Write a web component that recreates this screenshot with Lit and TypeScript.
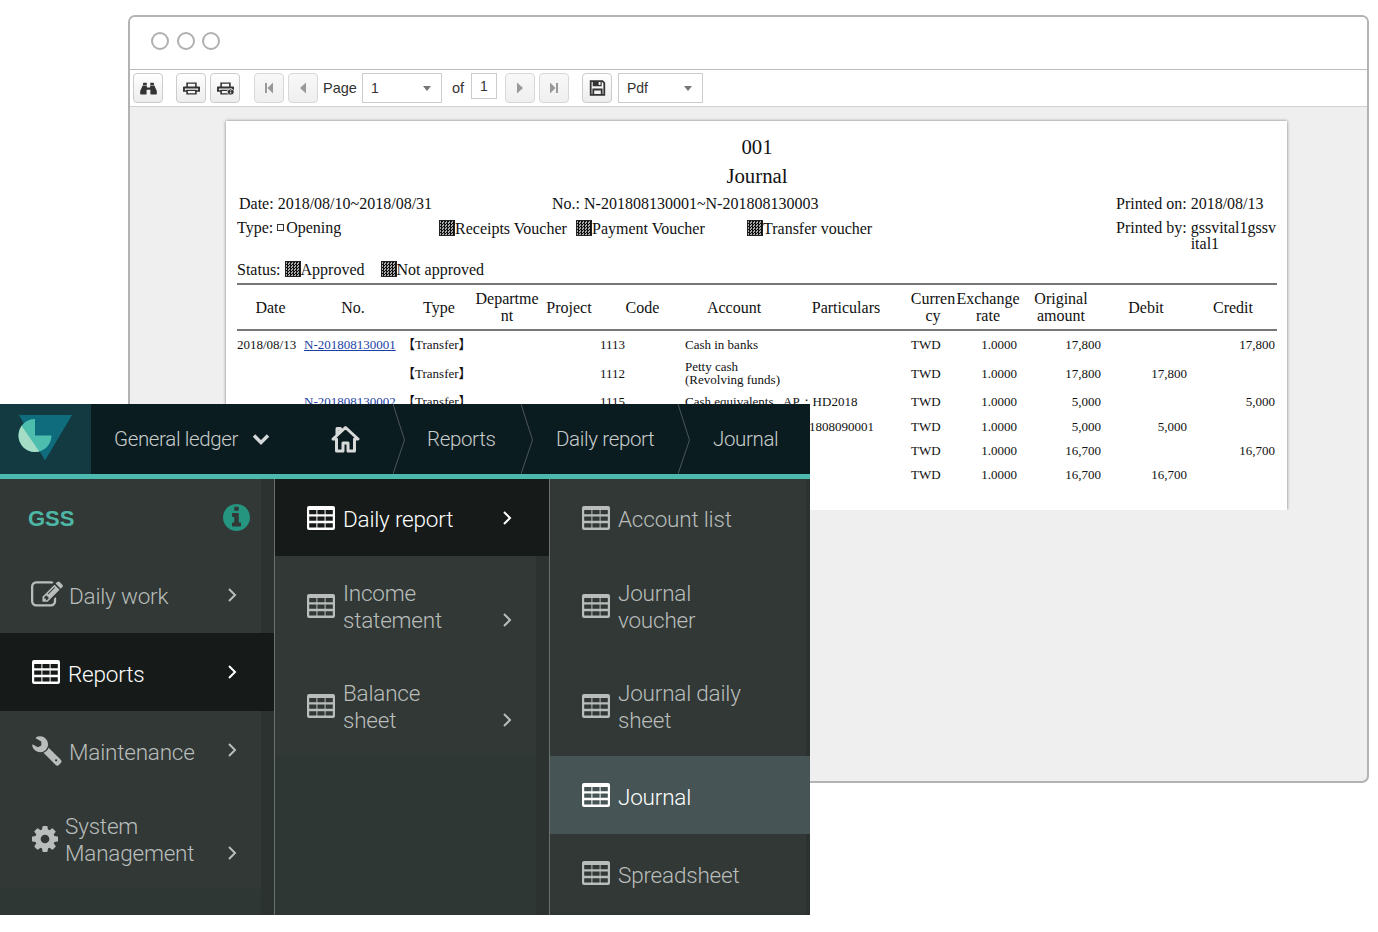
import { LitElement, html, css, svg } from "lit";
import { customElement } from "lit/decorators.js";

const cells = () => {
  let d = "M2 0h24a2 2 0 0 1 2 2v20a2 2 0 0 1-2 2H2a2 2 0 0 1-2-2V2a2 2 0 0 1 2-2z";
  for (const y of [4, 10.6, 17.2]) for (const x of [2.2, 10.4, 18.6]) d += `M${x} ${y}h7.2v4.2h-7.2z`;
  return d;
};
const tableIcon = html`<svg class="ic tb" viewBox="0 0 28 24"><path fill="currentColor" fill-rule="evenodd" d=${cells()}></path></svg>`;
const editIcon = html`<svg class="ic ed" viewBox="0 0 1792 1792"><path fill="currentColor" d="M888 1184l116-116-152-152-116 116v56h96v96h56zm440-720q-16-16-33 1l-350 350q-17 17-1 33t33-1l350-350q17-17 1-33zm80 594v190q0 119-84.5 203.5t-203.5 84.5h-832q-119 0-203.5-84.5t-84.5-203.5v-832q0-119 84.5-203.5t203.5-84.5h832q63 0 117 25 15 7 18 23 3 17-9 29l-49 49q-14 14-32 8-23-6-45-6h-832q-66 0-113 47t-47 113v832q0 66 47 113t113 47h832q66 0 113-47t47-113v-126q0-13 9-22l64-64q15-15 35-7t20 29zm-96-738l288 288-672 672h-288v-288zm444 132l-92 92-288-288 92-92q28-28 68-28t68 28l152 152q28 28 28 68t-28 68z"></path></svg>`;
const wrenchIcon = html`<svg class="ic wr" viewBox="0 0 1792 1792"><path fill="currentColor" transform="translate(1792 0) scale(-1 1)" d="M448 1472q0-26-19-45t-45-19-45 19-19 45 19 45 45 19 45-19 19-45zm644-420l-682 682q-37 37-90 37-52 0-91-37l-106-108q-38-36-38-90 0-53 38-91l681-681q39 98 114.5 173.5t173.5 114.5zm634-435q0 39-23 106-47 134-164.5 217.5t-258.5 83.5q-185 0-316.5-131.5t-131.5-316.5 131.5-316.5 316.5-131.5q58 0 121.5 16.5t107.5 46.5q16 11 16 28t-16 28l-293 169v224l193 107q5-3 79-48.5t135.5-81 70.5-35.5q15 0 23.5 10t8.5 25z"></path></svg>`;
const cogIcon = html`<svg class="ic cg" viewBox="128 128 1536 1536"><path fill="currentColor" d="M1152 896q0-106-75-181t-181-75-181 75-75 181 75 181 181 75 181-75 75-181zm512-109v222q0 12-8 23t-20 13l-185 28q-19 54-39 91 35 50 107 138 10 12 10 25t-9 23q-27 37-99 108t-94 71q-12 0-26-9l-138-108q-44 23-91 38-16 136-29 186-7 28-36 28h-222q-14 0-24.5-8.5t-11.5-21.5l-28-184q-49-16-90-37l-141 107q-10 9-25 9-14 0-25-11-126-114-165-168-7-10-7-23 0-12 8-23 15-21 51-66.5t54-70.5q-27-50-41-99l-183-27q-13-2-21-12.5t-8-23.5v-222q0-12 8-23t19-13l186-28q14-46 39-92-40-57-107-138-10-12-10-24 0-10 9-23 26-36 98.5-107.5t94.5-71.5q13 0 26 10l138 107q44-23 91-38 16-136 29-186 7-28 36-28h222q14 0 24.5 8.5t11.5 21.5l28 184q49 16 90 37l142-107q9-9 24-9 13 0 25 10 129 119 165 170 7 8 7 22 0 12-8 23-15 21-51 66.5t-54 70.5q26 50 41 98l183 28q13 2 21 12.5t8 23.5z"></path></svg>`;
const chev = html`<svg class="chev" viewBox="0 0 10 16"><path d="M2 2l6 6-6 6" fill="none" stroke="currentColor" stroke-width="2"></path></svg>`;

const binoc = html`<svg viewBox="0 0 18 16" preserveAspectRatio="none" class="tbi sq"><path fill="currentColor" d="M3.5.8h3.6v3H3zM10.900.8h3.600l.5 3h-4.100zM2.800 4.400h4.500v2.400h3.400V4.400h4.500L17.800 11v3.700a.6.600 0 0 1-.6.600h-5.600a.6.600 0 0 1-.6-.6V9.400H7v5.300a.6.600 0 0 1-.6.600H.8a.6.600 0 0 1-.6-.6V11z"></path></svg>`;
const printI = (extra: boolean) => html`<svg viewBox="0 0 18 16" preserveAspectRatio="none" class="tbi sq">
  <path fill="currentColor" fill-rule="evenodd" d="M3.5.5h11v5h2.500a1 1 0 0 1 1 1V12h-3.500V15.500h-11V12H0V6.500a1 1 0 0 1 1-1h2.500zM5.200 2.200v3.300h7.600V2.200zM2 8v2.200h1.500V9.500h11v.7H16V8zM5.200 11.200v2.600h7.600v-2.600z"></path>
  ${extra ? svg`<circle cx="14.500" cy="12.300" r="3.700" fill="currentColor" stroke="#f6f6f6" stroke-width=".8"></circle><path d="M14.500 10.200v.9M14.500 12v2.300" stroke="#f4f4f4" stroke-width="1.100"></path>` : ""}
</svg>`;
const first = html`<svg viewBox="0 0 12 16" class="tbi nav"><path fill="currentColor" d="M2 3h2v10H2zM10 2.500v11L4.500 8z"></path></svg>`;
const prev = html`<svg viewBox="0 0 12 16" class="tbi nav"><path fill="currentColor" d="M9 2.500v11L3 8z"></path></svg>`;
const next = html`<svg viewBox="0 0 12 16" class="tbi nav"><path fill="currentColor" d="M3 2.500v11L9 8z"></path></svg>`;
const last = html`<svg viewBox="0 0 12 16" class="tbi nav"><path fill="currentColor" d="M8 3h2v10H8zM2 2.500v11L7.500 8z"></path></svg>`;
const save = html`<svg viewBox="0 0 16 16" class="tbi"><path fill="none" stroke="currentColor" stroke-width="1.800" d="M1.200 1.200h11.800l1.800 1.800v11.800H1.200zM3.800 14.800V9.500h8.400v5.300"></path><path fill="currentColor" fill-rule="evenodd" d="M3.200 1h9v5.300h-9zM9.200 2v3h1.800V2z"></path></svg>`;

type Row = { d: string; n: string; t: string; c: string; a: unknown; p: unknown; o: string; de: string; cr: string };
const rows: Row[] = [
  { d: "2018/08/13", n: "N-201808130001", t: "【Transfer】", c: "1113", a: "Cash in banks", p: "", o: "17,800", de: "", cr: "17,800" },
  { d: "", n: "", t: "【Transfer】", c: "1112", a: html`Petty cash<br />(Revolving funds)`, p: "", o: "17,800", de: "17,800", cr: "" },
  { d: "", n: "N-201808130002", t: "【Transfer】", c: "1115", a: "Cash equivalents", p: "AP：HD2018", o: "5,000", de: "", cr: "5,000" },
  { d: "", n: "", t: "", c: "", a: "", p: html`<span class="pad">1808090001</span>`, o: "5,000", de: "5,000", cr: "" },
  { d: "", n: "", t: "", c: "", a: "", p: "", o: "16,700", de: "", cr: "16,700" },
  { d: "", n: "", t: "", c: "", a: "", p: "", o: "16,700", de: "16,700", cr: "" },
];

@customElement("app-root")
export class AppRoot extends LitElement {
  static styles = css`
    :host { display: block; position: relative; height: 932px; background: #fff; overflow: hidden; font-family: "Liberation Sans", Arial, sans-serif; }
    .win { box-sizing: border-box; width: 1241px; height: 768px; margin-left: 128px; position: relative; top: 15px; border: 2px solid #b3b3b3; border-radius: 7px; background: #efefef; display: flex; flex-direction: column; overflow: hidden; }
    .title { box-sizing: border-box; height: 52px; background: #fff; display: flex; align-items: center; padding: 0 0 4px 21px; gap: 7.5px; flex: none; }
    .dot { box-sizing: border-box; width: 18px; height: 18px; border: 2px solid #b0b0b0; border-radius: 50%; }
    .tools { flex: none; height: 38px; box-sizing: border-box; background: #fff; border-top: 1px solid #bdbdbd; border-bottom: 1px solid #d0d0d0; display: flex; align-items: center; padding-left: 3px; font-size: 14.5px; color: #333; }
    .btn { box-sizing: border-box; width: 30px; height: 30px; border: 1px solid #ccc; border-radius: 4px; background: linear-gradient(#fff, #ececec); display: flex; align-items: center; justify-content: center; color: #333; flex: none; }
    .btn.off { color: #999; background: linear-gradient(#f8f8f8, #efefef); border-color: #d8d8d8; }
    .tbi { width: 17px; height: 16px; }
    .tbi.nav { width: 12px; }
    .tbi.sq { height: 13px; }
    .ml4 { margin-left: 4px; } .ml5 { margin-left: 5px; } .ml6 { margin-left: 6px; } .ml8 { margin-left: 8px; } .ml10 { margin-left: 10px; } .ml13 { margin-left: 13px; } .ml14 { margin-left: 14px; }
    .pg { width: 33px; flex: none; white-space: nowrap; }
    .of { width: 13px; flex: none; }
    .sel { box-sizing: border-box; height: 30px; border: 1px solid #ccc; display: flex; align-items: center; justify-content: space-between; padding: 0 9px 0 8px; background: #fff; flex: none; font-size: 14px; }
    .sel.p { width: 80px; } .sel.f { width: 85px; }
    .caret { width: 0; height: 0; border: 4.5px solid transparent; border-top: 5px solid #777; border-bottom: 0; margin-right: 1px; }
    .num { box-sizing: border-box; width: 26px; height: 26px; border: 1px solid #ccc; display: flex; align-items: center; justify-content: center; font-size: 14px; position: relative; top: -2px; }
    .body { flex: 1; overflow: hidden; }
    .page { box-sizing: border-box; margin: 14px 0 0 96px; width: 1061px; height: 389px; background: #fff; box-shadow: 0 0 3px #777; clip-path: inset(-4px -4px 0 -4px); padding: 11px 10px 0 11px; font: 16px/16px "Liberation Serif", "Times New Roman", serif; color: #111; overflow: hidden; }
    h1 { margin: 0; font-weight: 400; font-size: 20.8px; line-height: 29px; text-align: center; }
    .info { display: flex; }
    .r1 { margin-top: 6px; padding-left: 2px; }
    .r2 { margin-top: 8px; height: 41px; }
    .r3 { height: 22px; }
    .c315 { width: 313px; } .c564 { width: 564px; }
    .c202 { width: 202px; } .c137 { width: 137px; } .c171 { width: 171px; } .c369 { width: 369px; }
    .s2 { margin-left: 16px; }
    .by { display: flex; }
    .byv { width: 86px; word-break: break-all; margin-left: 4px; }
    .box { display: inline-block; width: 5px; height: 5px; border: 1px solid #333; margin: 0 2px 2px 4px; }
    .chk { display: inline-block; width: 16px; height: 16px; vertical-align: -2px; background: repeating-conic-gradient(#111 0 25%, #aaa 0 50%) 0 0 / 3px 3px; border: 1px solid #222; box-sizing: border-box; }
    table { border-collapse: collapse; table-layout: fixed; width: 1040px; border-top: 2px solid #777; }
    th { font-weight: 400; font-size: 16px; line-height: 17px; height: 44px; padding: 0; vertical-align: middle; }
    .h { display: flex; flex-direction: column; align-items: center; white-space: nowrap; }
    thead tr { border-bottom: 2px solid #777; }
    td { font-size: 13px; line-height: 13px; padding: 0; white-space: nowrap; vertical-align: middle; height: 24px; }
    tr.r0 td { height: 27px; }
    tr.r1x td { height: 30px; }
    tr.r2x td { height: 26px; }
    td.tw { padding-left: 2px; }
    td.n { text-align: right; padding-right: 2px; }
    .pad { padding-left: 26px; }
    a { color: #1c3fa5; text-decoration: underline; }
    .cjk { font-family: "Liberation Serif", "Noto Sans CJK TC", serif; }

    .ov { position: absolute; left: 0; top: 404px; width: 810px; height: 511px; background: #2b322f; display: flex; flex-direction: column; font-family: Roboto, "Liberation Sans", sans-serif; font-weight: 300; }
    .top { flex: none; height: 70px; background: #0b1c20; display: flex; align-items: center; color: #c8cccc; font-size: 20.5px; letter-spacing: -0.35px; }
    .logo { width: 91px; height: 70px; background: #133a40; flex: none; }
    .gl { margin-left: 23px; width: 125px; white-space: nowrap; flex: none; }
    .dn { width: 18px; height: 12px; margin-left: 13px; color: #d5d8d8; flex: none; }
    .home { width: 29px; height: 28px; margin-left: 61px; color: #d8dada; flex: none; }
    .sep { width: 12px; height: 70px; flex: none; color: #4d5658; }
    .sp1 { margin-left: 33px; }
    .crumb { white-space: nowrap; flex: none; }
    .cw1 { margin-left: 22px; width: 70px; } .sp2 { margin-left: 24px; }
    .cw2 { margin-left: 23px; width: 98px; } .sp3 { margin-left: 24px; }
    .cw3 { margin-left: 23px; }
    .rule { flex: none; height: 5px; background: #4db8ad; }
    .cols { flex: 1; display: flex; min-height: 0; }
    .col { display: flex; flex-direction: column; flex: none; }
    .c1 { width: 274px; }
    .c2 { width: 275px; border-left: 1px solid #6b716f; box-sizing: border-box; }
    .c3 { width: 261px; border-left: 1px solid #6b716f; box-sizing: border-box; }
    .row { box-sizing: border-box; display: flex; align-items: center; margin-right: 13px; background: #313836; padding-left: 32px; color: #b9bdbb; font-size: 22.5px; line-height: 27px; flex: none; height: 78px; letter-spacing: -0.2px; }
    .row.r77 { height: 77px; }
    .c3 .row { margin-right: 4px; }
    .row.h100 { height: 100px; }
    .row.on { background: #161b1a; color: #fff; margin-right: 0; padding-right: 13px; }
    .c3 .row.sel3 { background: #465455; color: #fff; margin-right: 0; }
    .lab { flex: 1; padding-top: 4px; }
    .h100 .lab { padding-top: 2px; }
    .ic { flex: none; }
    .tb { width: 28px; height: 24px; margin-right: 8px; }
    .ed { width: 32px; height: 32px; margin-right: 6px; margin-left: -1px; }
    .wr { width: 32px; height: 32px; margin-right: 6px; margin-left: -1px; }
    .cg { width: 26px; height: 26px; margin-right: 7px; }
    .chev { width: 10px; height: 16px; margin-right: 24px; flex: none; }
    .late { align-self: flex-end; margin-bottom: 33px; height: 16px; }
    .fill { flex: 1; background: #2f3734; margin-right: 13px; }
    .c3 .fill { margin-right: 4px; }
    .gss { font: 700 22px "Liberation Sans", sans-serif; color: #4db6a5; letter-spacing: 0; margin-left: -4px; padding-top: 2px; }
    .inf { width: 27px; height: 27px; color: #26957f; margin-right: 11px; flex: none; }
  `;

  private th(t: string) {
    const parts = t.split("|");
    return html`<th><div class="h">${parts.map((p) => html`<span>${p}</span>`)}</div></th>`;
  }

  render() {
    return html`
      <div class="win">
        <div class="title"><span class="dot"></span><span class="dot"></span><span class="dot"></span></div>
        <div class="tools">
          <div class="btn">${binoc}</div>
          <div class="btn ml13">${printI(false)}</div>
          <div class="btn ml4">${printI(true)}</div>
          <div class="btn off ml14">${first}</div>
          <div class="btn off ml4">${prev}</div>
          <span class="ml5 pg">Page</span>
          <div class="sel p ml6"><span>1</span><span class="caret"></span></div>
          <span class="ml10 of">of</span>
          <div class="num ml6">1</div>
          <div class="btn off ml8">${next}</div>
          <div class="btn off ml4">${last}</div>
          <div class="btn ml13">${save}</div>
          <div class="sel f ml6"><span>Pdf</span><span class="caret"></span></div>
        </div>
        <div class="body">
          <div class="page">
            <h1>001</h1>
            <h1>Journal</h1>
            <div class="info r1">
              <div class="c315">Date: 2018/08/10~2018/08/31</div>
              <div class="c564">No.: N-201808130001~N-201808130003</div>
              <div>Printed on: 2018/08/13</div>
            </div>
            <div class="info r2">
              <div class="c202">Type:<span class="box"></span>Opening</div>
              <div class="c137"><span class="chk"></span>Receipts Voucher</div>
              <div class="c171"><span class="chk"></span>Payment Voucher</div>
              <div class="c369"><span class="chk"></span>Transfer voucher</div>
              <div class="by"><span>Printed by:</span><span class="byv">gssvital1gssvital1</span></div>
            </div>
            <div class="info r3">
              <div>Status: <span class="chk"></span>Approved<span class="chk s2"></span>Not approved</div>
            </div>
            <table>
              <colgroup>
                ${[67, 98, 74, 62, 62, 85, 98, 126, 48, 62, 84, 86, 88].map((w) => html`<col style="width:${w}px" />`)}
              </colgroup>
              <thead>
                <tr>
                  ${["Date", "No.", "Type", "Departme|nt", "Project", "Code", "Account", "Particulars", "Curren|cy", "Exchange|rate", "Original|amount", "Debit", "Credit"].map((t) => this.th(t))}
                </tr>
              </thead>
              <tbody>
                ${rows.map((r, i) => html`<tr class=${i === 0 ? "r0" : i === 1 ? "r1x" : i === 2 ? "r2x" : ""}>
                  <td>${r.d}</td><td>${r.n ? html`<a href="#">${r.n}</a>` : ""}</td><td class="cjk">${r.t}</td><td></td><td></td>
                  <td>${r.c}</td><td>${r.a}</td><td>${r.p}</td><td class="tw">TWD</td><td class="n">1.0000</td><td class="n">${r.o}</td><td class="n">${r.de}</td><td class="n">${r.cr}</td>
                </tr>`)}
              </tbody>
            </table>
          </div>
        </div>
      </div>

      <div class="ov">
        <div class="top">
          <div class="logo">
            <svg width="91" height="70" viewBox="0 0 91 70">
              <defs><clipPath id="pie"><path d="M35 15a16.5 16.5 0 1 0 16.5 16.5H35z"></path></clipPath></defs>
              <path d="M19 11h53L45 56.5z" fill="#0f6c7c"></path>
              <g clip-path="url(#pie)">
                <rect x="15" y="10" width="40" height="40" fill="#4dbdad"></rect>
                <path d="M19 18L41 50H10V18z" fill="#a4dcc6"></path>
              </g>
            </svg>
          </div>
          <span class="gl">General ledger</span>
          <svg class="dn" viewBox="0 0 18 12"><path d="M2 2.5l7 7 7-7" fill="none" stroke="currentColor" stroke-width="3.4"></path></svg>
          <svg class="home" viewBox="0 0 29 28"><path d="M14.5 2.5L27 14h-3.500v12h-6.500v-8h-5v8H5.500V14H2zM6 3.500h3.500v2.500L6 9.200z" fill="none" stroke="currentColor" stroke-width="3" stroke-linejoin="round"></path></svg>
          <svg class="sep sp1" viewBox="0 0 12 70"><path d="M0 0l11.500 36L0 70" fill="none" stroke="currentColor"></path></svg>
          <span class="crumb cw1">Reports</span>
          <svg class="sep sp2" viewBox="0 0 12 70"><path d="M0 0l11.500 36L0 70" fill="none" stroke="currentColor"></path></svg>
          <span class="crumb cw2">Daily report</span>
          <svg class="sep sp3" viewBox="0 0 12 70"><path d="M0 0l11.500 36L0 70" fill="none" stroke="currentColor"></path></svg>
          <span class="crumb cw3">Journal</span>
        </div>
        <div class="rule"></div>
        <div class="cols">
          <div class="col c1">
            <div class="row r77"><span class="lab gss">GSS</span>
              <svg class="inf" viewBox="128 128 1536 1536"><path fill="currentColor" d="M1152 1376v-160q0-14-9-23t-23-9h-96v-512q0-14-9-23t-23-9h-320q-14 0-23 9t-9 23v160q0 14 9 23t23 9h96v320h-96q-14 0-23 9t-9 23v160q0 14 9 23t23 9h448q14 0 23-9t9-23zm-128-896v-160q0-14-9-23t-23-9h-192q-14 0-23 9t-9 23v160q0 14 9 23t23 9h192q14 0 23-9t9-23zm640 416q0 209-103 385.500t-279.500 279.500-385.500 103-385.500-103-279.500-279.500-103-385.500 103-385.500 279.500-279.500 385.500-103 385.500 103 279.500 279.500 103 385.500z"></path></svg>
            </div>
            <div class="row r77">${editIcon}<span class="lab">Daily work</span>${chev}</div>
            <div class="row on">${tableIcon}<span class="lab">Reports</span>${chev}</div>
            <div class="row">${wrenchIcon}<span class="lab">Maintenance</span>${chev}</div>
            <div class="row h100">${cogIcon}<span class="lab">System<br />Management</span><span class="late">${chev}</span></div>
            <div class="fill"></div>
          </div>
          <div class="col c2">
            <div class="row on r77">${tableIcon}<span class="lab">Daily report</span>${chev}</div>
            <div class="row h100">${tableIcon}<span class="lab">Income<br />statement</span><span class="late">${chev}</span></div>
            <div class="row h100">${tableIcon}<span class="lab">Balance<br />sheet</span><span class="late">${chev}</span></div>
            <div class="fill"></div>
          </div>
          <div class="col c3">
            <div class="row r77">${tableIcon}<span class="lab">Account list</span></div>
            <div class="row h100">${tableIcon}<span class="lab">Journal<br />voucher</span></div>
            <div class="row h100">${tableIcon}<span class="lab">Journal daily<br />sheet</span></div>
            <div class="row sel3">${tableIcon}<span class="lab">Journal</span></div>
            <div class="row">${tableIcon}<span class="lab">Spreadsheet</span></div>
            <div class="fill"></div>
          </div>
        </div>
      </div>
    `;
  }
}
